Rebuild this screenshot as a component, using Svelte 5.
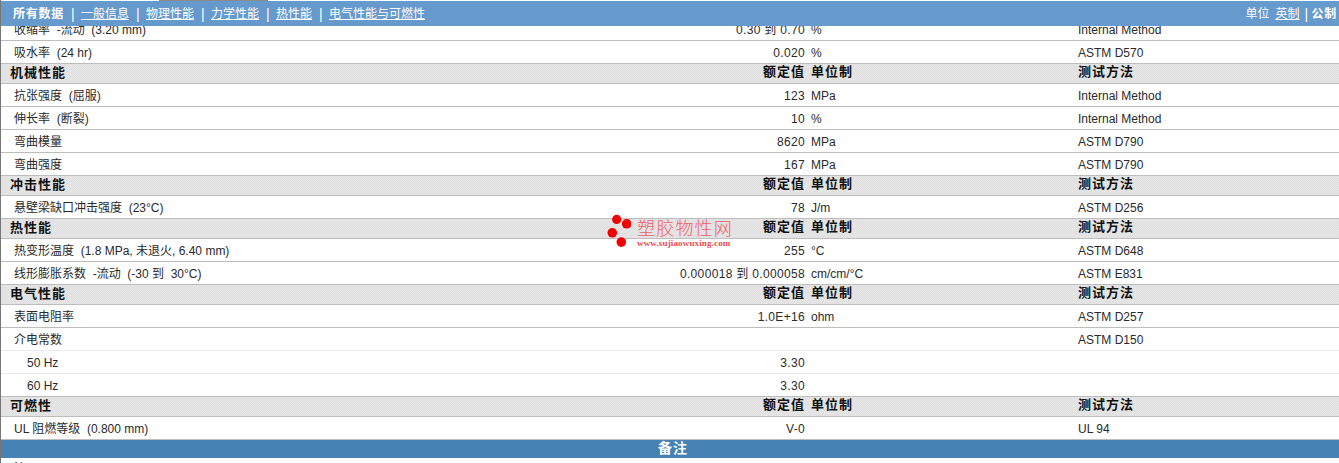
<script>
  const value = '额定值';
  const unit = '单位制';
  const test = '测试方法';
  const rows = [
    { name: '收缩率  -流动  (3.20 mm)', val: '0.30 到 0.70', unit: '%', test: 'Internal Method' },
    { name: '吸水率  (24 hr)', val: '0.020', unit: '%', test: 'ASTM D570' },
    { head: '机械性能' },
    { name: '抗张强度  (屈服)', val: '123', unit: 'MPa', test: 'Internal Method' },
    { name: '伸长率  (断裂)', val: '10', unit: '%', test: 'Internal Method' },
    { name: '弯曲模量', val: '8620', unit: 'MPa', test: 'ASTM D790' },
    { name: '弯曲强度', val: '167', unit: 'MPa', test: 'ASTM D790' },
    { head: '冲击性能' },
    { name: '悬壁梁缺口冲击强度  (23°C)', val: '78', unit: 'J/m', test: 'ASTM D256' },
    { head: '热性能' },
    { name: '热变形温度  (1.8 MPa, 未退火, 6.40 mm)', val: '255', unit: '°C', test: 'ASTM D648' },
    { name: '线形膨胀系数  -流动  (-30 到  30°C)', val: '0.000018 到 0.000058', unit: 'cm/cm/°C', test: 'ASTM E831' },
    { head: '电气性能' },
    { name: '表面电阻率', val: '1.0E+16', unit: 'ohm', test: 'ASTM D257' },
    { name: '介电常数', val: '', unit: '', test: 'ASTM D150' },
    { name: '50 Hz', val: '3.30', unit: '', test: '', sub: true },
    { name: '60 Hz', val: '3.30', unit: '', test: '', sub: true },
    { head: '可燃性' },
    { name: 'UL 阻燃等级  (0.800 mm)', val: 'V-0', unit: '', test: 'UL 94' }
  ];
  const links = ['一般信息', '物理性能', '力学性能', '热性能', '电气性能与可燃性'];
</script>

<div class="page">
  <div class="tab-edge"></div>
  <nav class="nav">
    <div class="nav-group">
      <b class="active">所有数据</b>
      {#each links as link}
        <span class="sep">|</span>
        <a href="#top" class="link">{link}</a>
      {/each}
    </div>
    <div class="units">
      <span>单位</span>
      <a href="#top" class="link">英制</a>
      <span class="sep">|</span>
      <b class="active">公制</b>
    </div>
  </nav>

  <div class="sheet">
    {#each rows as row}
      {#if row.head}
        <div class="row head">
          <div class="name">{row.head}</div>
          <div class="val">{value}</div>
          <div>{unit}</div>
          <div>{test}</div>
        </div>
      {:else}
        <div class="row" class:sub={row.sub}>
          <div class="name">{row.name}</div>
          <div class="val">{row.val}</div>
          <div>{row.unit}</div>
          <div>{row.test}</div>
        </div>
      {/if}
    {/each}
    <div class="notes-title">备注</div>
    <div class="notes">注</div>
  </div>

  <div class="mark">
    <svg width="24" height="34" viewBox="0 0 24 34">
      <circle cx="9.7" cy="5.4" r="4.6" />
      <circle cx="19.7" cy="9.8" r="4.8" />
      <circle cx="5.3" cy="18.8" r="4.8" />
      <circle cx="14.3" cy="28.1" r="4.8" />
    </svg>
    <div class="mark-text">
      <div class="mark-cn">塑胶物性网</div>
      <div class="mark-url">www.sujiaowuxing.com</div>
    </div>
  </div>
</div>

<style>
  :global(html), :global(body) {
    margin: 0;
    height: 463px;
    overflow: hidden;
    background: #fff;
  }
  .page {
    position: relative;
    height: 463px;
    overflow: hidden;
    font: 12px/14px "Liberation Sans", "Noto Sans CJK SC", sans-serif;
    color: #2a2a2a;
    background: #fff;
  }
  .tab-edge {
    position: absolute;
    top: 0;
    left: 159px;
    width: 109px;
    height: 1px;
    background: #8a8a8a;
  }
  .nav {
    position: absolute;
    top: 1px;
    left: 1px;
    right: 0;
    height: 25px;
    z-index: 2;
    display: flex;
    justify-content: space-between;
    align-items: center;
    padding: 0 2px 0 12px;
    background: #6699cc;
    color: #fff;
  }
  .nav-group, .units {
    display: flex;
    align-items: center;
    gap: 7px;
  }
  .units { gap: 6px; }
  .units .sep { margin-left: -1px; margin-right: -2px; }
  .active { letter-spacing: 0.75px; font-weight: 700; }
  .link { color: #fff; text-decoration: underline; }
  .sep {
    font-size: 14px;
    width: 3px;
    text-align: center;
  }
  .sheet {
    padding-top: 18px;
    border-left: 1px solid #777;
    min-height: 445px;
  }
  .row {
    display: grid;
    grid-template-columns: 1fr 200px 267px 261px;
    box-sizing: border-box;
    height: 23px;
    padding-top: 5px;
    border-bottom: 1px solid #bdbdbd;
    white-space: pre;
  }
  .name { padding-left: 13px; }
  .val { padding-right: 6px; text-align: right; letter-spacing: 0.33px; }
  .sub { border-bottom-color: #ece9f0; }
  .sub .name { padding-left: 26px; }
  .row.sub:has(+ .head) { border-bottom-color: #bdbdbd; }
  .row:has(+ .sub) { border-bottom-color: #ece9f0; }
  .head {
    height: 20px;
    padding-top: 1px;
    font-size: 13px;
    font-weight: 700;
    color: #111;
    letter-spacing: 1px;
    background: repeating-conic-gradient(#e0e0e0 0 25%, #e6e6e6 0 50%) 0 0 / 2px 2px;
  }
  .head .val { letter-spacing: 1px; }
  .head .name { padding: 1px 0 0 9px; }
  .notes-title {
    height: 18px;
    background: #4682b4;
    color: #fff;
    font-size: 14px;
    line-height: 16px;
    font-weight: 700;
    letter-spacing: 1px;
    text-align: center;
    padding-left: 6px;
    box-sizing: border-box;
  }
  .notes {
    padding: 4px 0 0 13px;
    line-height: 14px;
  }
  .mark {
    position: absolute;
    left: 607px;
    top: 214px;
    display: flex;
    gap: 6px;
    pointer-events: none;
  }
  .mark svg { fill: #f00000; display: block; }
  .mark-cn {
    font-size: 18px;
    line-height: 20px;
    color: #f0606a;
    font-weight: 300;
    letter-spacing: 1.2px;
    margin-top: 5px;
  }
  .mark-url {
    font: 700 9px/10px "Liberation Serif", serif;
    color: #e84a50;
    letter-spacing: 0.15px;
    margin-top: -1px;
  }
</style>
